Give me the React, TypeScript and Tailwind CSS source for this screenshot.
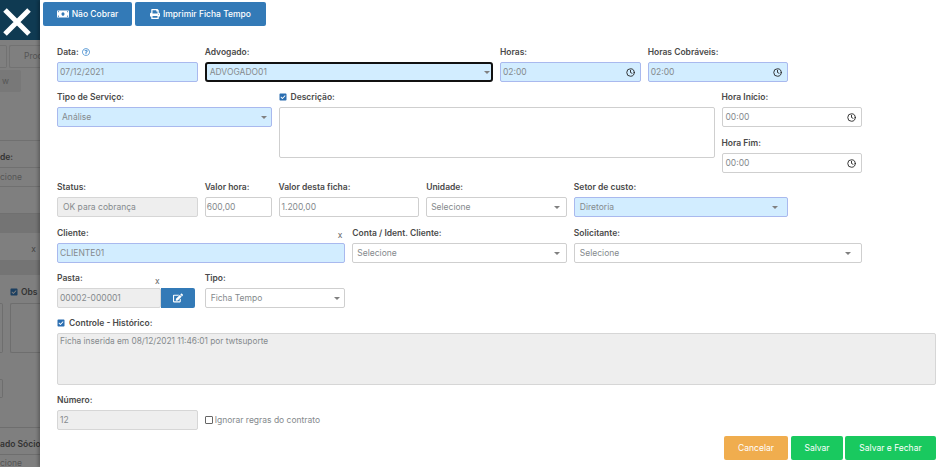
import type { ReactNode } from 'react';
import { FaCheckSquare, FaEdit, FaMoneyBill, FaPrint, FaRegQuestionCircle } from 'react-icons/fa';
import { LuClock } from 'react-icons/lu';

const font = "font-['Inter','Noto_Sans',sans-serif]";

interface FieldProps {
  label?: ReactNode;
  span: string;
  children: ReactNode;
}

function Field({ label, span, children }: FieldProps) {
  return (
    <div className={`${span} flex flex-col min-w-0`}>
      <div className="h-[10px] mb-[5px] flex items-center gap-[3px] text-[8.5px] leading-[10px] font-semibold text-[#4a4a4a] whitespace-nowrap">
        {label}
      </div>
      {children}
    </div>
  );
}

interface BoxProps {
  value: string;
  kind?: 'plain' | 'blue' | 'gray' | 'focus';
  pad?: string;
  right?: ReactNode;
}

function Box({ value, kind = 'plain', pad = 'pl-[2px]', right }: BoxProps) {
  const colors = {
    plain: 'bg-white border border-[#cfcfcf]',
    blue: 'bg-[#d2edff] border border-[#a9b9ee]',
    gray: 'bg-[#eeeeee] border border-[#d6d6d6]',
    focus: 'bg-[#d2edff] border-2 border-[#111111] rounded-[3px]',
  };
  return (
    <div
      className={`h-[20px] rounded-[2px] flex items-center justify-between pr-[5px] text-[8.5px] text-[#858a8d] whitespace-nowrap ${pad} ${colors[kind]}`}
    >
      <span>{value}</span>
      {right}
    </div>
  );
}

function Caret({ className }: { className: string }) {
  return <span className={`w-0 h-0 border-x-[3px] border-x-transparent border-t-[3px] border-t-[#808080] ${className}`} />;
}

function Clock() {
  return <LuClock className="text-[#222222]" size={9} strokeWidth={2.4} />;
}

function Check() {
  return <FaCheckSquare className="text-[#2a6db0] shrink-0" size={8} />;
}

function SideBar() {
  return (
    <aside className={`w-[40px] shrink-0 h-[467px] overflow-hidden bg-[#7f7f7f] flex flex-col text-[8.5px] text-[#4a4a4a] ${font}`}>
      <div className="h-[40px] shrink-0 bg-[#0f3a52] flex items-center justify-center pr-[7px] pt-[4px]">
        <svg width="28" height="28" viewBox="0 0 28 28">
          <path d="M2 2 L26 26 M26 2 L2 26" stroke="#ffffff" strokeWidth="5" />
        </svg>
      </div>
      <div className="mt-[5px] h-[23px] flex gap-[2px] shrink-0">
        <div className="w-[7px] border-y border-r border-[#727272] rounded-r-[2px]" />
        <div className="flex-1 border-y border-l border-[#727272] rounded-l-[2px] pl-[14px] flex items-center overflow-hidden text-[#555555]">Proc</div>
      </div>
      <div className="mt-[2px] h-[22px] w-[21px] shrink-0 bg-[#787878] rounded-r-[2px] flex items-center pl-[2px] text-[#555555]">w</div>
      <div className="mt-[48px] h-px bg-[#707070] shrink-0" />
      <div className="mt-[11px] h-[10px] leading-[10px] font-semibold text-[#333333] shrink-0">de:</div>
      <div className="mt-[5px] h-[20px] border-y border-[#707070] flex items-center text-[#555555] shrink-0">cione</div>
      <div className="mt-[26px] h-[20px] bg-[#747474] border-t border-[#707070] shrink-0" />
      <div className="h-[27px] pt-[5px] flex justify-end items-center pr-[4px] text-[#444444] shrink-0">x</div>
      <div className="h-[15px] bg-[#747474] shrink-0" />
      <div className="mt-[11px] h-[12px] pl-[10px] flex items-center gap-[3px] font-semibold text-[#333333] shrink-0">
        <FaCheckSquare className="text-[#1c3f60] shrink-0" size={8} />
        Obs
      </div>
      <div className="mt-[5px] h-[50px] flex gap-[7px] shrink-0">
        <div className="w-[3px] border-y border-r border-[#6e6e6e] rounded-r-[2px]" />
        <div className="flex-1 border-y border-l border-[#6e6e6e] rounded-l-[2px]" />
      </div>
      <div className="mt-[26px] h-[19px] w-[3px] border-y border-r border-[#6e6e6e] rounded-r-[2px] shrink-0" />
      <div className="mt-[29px] h-px bg-[#6e6e6e] shrink-0" />
      <div className="mt-[11px] h-[10px] leading-[10px] font-semibold whitespace-nowrap text-[#333333] shrink-0">ado Sócio</div>
      <div className="mt-[5px] h-px bg-[#6e6e6e] shrink-0" />
      <div className="mt-[3px] text-[#555555] leading-[10px] shrink-0">cione</div>
    </aside>
  );
}

export default function App() {
  return (
    <div className={`w-[945px] h-[467px] overflow-hidden flex bg-white ${font}`}>
      <SideBar />
      <main className="flex-1 min-w-0 flex flex-col pr-[9px] shadow-[-2px_0_3px_rgba(0,0,0,0.25)] bg-white">
        <div className="pt-[2px] pl-[3px] flex gap-[3px]">
          <button className="w-[89px] h-[24px] rounded-[2px] bg-[#337ab7] text-white text-[8.5px] font-medium flex items-center justify-center gap-[3px]">
            <FaMoneyBill size={12} />
            Não Cobrar
          </button>
          <button className="w-[131px] h-[24px] rounded-[2px] bg-[#337ab7] text-white text-[8.5px] font-medium flex items-center justify-center gap-[3px]">
            <FaPrint size={10} />
            Imprimir Ficha Tempo
          </button>
        </div>

        <div className="mt-[21px] pl-[17px] grid grid-cols-12 gap-x-[7px] gap-y-[10px]">
          <Field
            span="col-span-2"
            label={
              <>
                Data:
                <FaRegQuestionCircle className="text-[#4f93d2]" size={8} />
              </>
            }
          >
            <Box value="07/12/2021" kind="blue" />
          </Field>
          <Field span="col-span-4" label="Advogado:">
            <Box value="ADVOGADO01" kind="focus" pad="pl-[3px]" right={<Caret className="mr-[-4px]" />} />
          </Field>
          <Field span="col-span-2" label="Horas:">
            <Box value="02:00" kind="blue" right={<Clock />} />
          </Field>
          <Field span="col-span-2" label="Horas Cobráveis:">
            <Box value="02:00" kind="blue" right={<Clock />} />
          </Field>
          <div className="col-span-2" />

          <Field span="col-span-3" label="Tipo de Serviço:">
            <Box value="Análise" kind="blue" pad="pl-[4px]" right={<Caret className="mr-[-1px]" />} />
          </Field>
          <Field
            span="col-span-6"
            label={
              <>
                <Check />
                <span className="ml-[1px]">Descrição:</span>
              </>
            }
          >
            <div className="h-[51px] rounded-[2px] border border-[#cfcfcf] bg-white" />
          </Field>
          <div className="col-span-2 flex flex-col gap-[11px] -mb-px">
            <Field span="" label="Hora Início:">
              <Box value="00:00" pad="pl-[3px]" right={<Clock />} />
            </Field>
            <Field span="" label="Hora Fim:">
              <Box value="00:00" pad="pl-[3px]" right={<Clock />} />
            </Field>
          </div>
          <div />

          <Field span="col-span-2" label="Status:">
            <Box value="OK para cobrança" kind="gray" pad="pl-[5px]" />
          </Field>
          <Field span="col-span-1" label="Valor hora:">
            <Box value="600,00" pad="pl-[1px]" />
          </Field>
          <Field span="col-span-2" label="Valor desta ficha:">
            <Box value="1.200,00" />
          </Field>
          <Field span="col-span-2" label="Unidade:">
            <Box value="Selecione" pad="pl-[4px]" right={<Caret className="mr-[1px]" />} />
          </Field>
          <Field span="col-span-3" label="Setor de custo:">
            <Box value="Diretoria" kind="blue" pad="pl-[5px]" right={<Caret className="mr-[4px]" />} />
          </Field>
          <div className="col-span-2" />

          <div className="col-span-4 relative mt-px">
            <Field span="" label="Cliente:">
              <Box value="CLIENTE01" kind="blue" />
            </Field>
            <span className="absolute right-[3px] top-[1px] text-[8.5px] text-[#666666]">x</span>
          </div>
          <Field span="col-span-3 mt-px" label="Conta / Ident. Cliente:">
            <Box value="Selecione" pad="pl-[4px]" right={<Caret className="mr-[1px]" />} />
          </Field>
          <Field span="col-span-4 mt-px" label="Solicitante:">
            <Box value="Selecione" pad="pl-[5px]" right={<Caret className="mr-[5px]" />} />
          </Field>
          <div />

          <div className="col-span-2 relative">
            <Field span="" label="Pasta:">
              <div className="flex pr-[3px]">
                <div className="flex-1 min-w-0">
                  <Box value="00002-000001" kind="gray" />
                </div>
                <button className="w-[34px] h-[20px] bg-[#337ab7] rounded-r-[2px] text-white flex items-center justify-center">
                  <FaEdit size={10} />
                </button>
              </div>
            </Field>
            <span className="absolute left-[98px] top-[2px] text-[8.5px] text-[#666666]">x</span>
          </div>
          <Field span="col-span-2" label="Tipo:">
            <Box value="Ficha Tempo" pad="pl-[5px]" right={<Caret className="mr-[-1px]" />} />
          </Field>
          <div className="col-span-8" />

          <Field
            span="col-span-12"
            label={
              <>
                <Check />
                <span className="ml-[1px]">Controle - Histórico:</span>
              </>
            }
          >
            <div className="h-[52px] rounded-[2px] border border-[#d6d6d6] bg-[#eeeeee] pl-[2px] pt-[1px] text-[8.3px] text-[#858a8d]">
              Ficha inserida em 08/12/2021 11:46:01 por twtsuporte
            </div>
          </Field>

          <Field span="col-span-2" label="Número:">
            <Box value="12" kind="gray" />
          </Field>
          <label className="col-span-4 self-end h-[20px] flex items-center gap-[2px] text-[8.5px] text-[#858a8d]">
            <span className="w-[8px] h-[8px] rounded-[1px] border border-[#666666] bg-white" />
            Ignorar regras do contrato
          </label>
        </div>

        <div className="mt-[6px] flex justify-end gap-[2px]">
          <button className="w-[64px] h-[24px] mr-px rounded-[2px] bg-[#f0ad4e] text-white text-[8.5px]">Cancelar</button>
          <button className="w-[52px] h-[24px] rounded-[2px] bg-[#19c95f] text-white text-[8.5px]">Salvar</button>
          <button className="w-[91px] h-[24px] rounded-[2px] bg-[#19c95f] text-white text-[8.5px]">Salvar e Fechar</button>
        </div>
      </main>
    </div>
  );
}
